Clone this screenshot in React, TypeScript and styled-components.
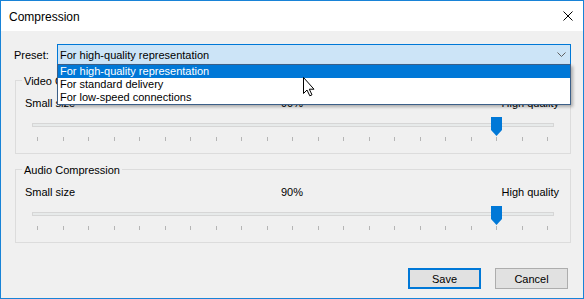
import React from "react";
import styled, { createGlobalStyle } from "styled-components";

const GlobalStyle = createGlobalStyle`
  html, body {
    margin: 0;
    padding: 0;
    background: #ffffff;
  }
  * {
    box-sizing: border-box;
  }
`;

const PRESETS = [
  "For high-quality representation",
  "For standard delivery",
  "For low-speed connections",
];

const TICKS = Array.from({ length: 21 }, (_, i) => i);

const Window = styled.div`
  position: relative;
  width: 584px;
  height: 299px;
  border: 1px solid #1883d7;
  background: #f0f0f0;
  display: flex;
  flex-direction: column;
  font-family: "Liberation Sans", Arial, sans-serif;
  font-size: 11px;
  color: #000;
`;

const TitleBar = styled.div`
  height: 30px;
  flex-shrink: 0;
  background: #ffffff;
  display: flex;
  align-items: center;
  justify-content: space-between;
  padding: 1px 10px 0 8px;
`;

const Title = styled.span`
  font-size: 12px;
`;

const CloseIcon = styled.svg`
  width: 10px;
  height: 10px;
  margin-bottom: 1px;
`;

const Body = styled.div`
  flex: 1;
  display: flex;
  flex-direction: column;
  padding: 13px 12px 9px 14px;
`;

const PresetRow = styled.div`
  display: flex;
  align-items: center;
  margin-left: -1px;
`;

const PresetLabel = styled.span`
  width: 43px;
  flex-shrink: 0;
  line-height: 14px;
`;

const ComboWrap = styled.div`
  position: relative;
  flex: 1;
`;

const Combo = styled.div`
  height: 21px;
  border: 1px solid #0078d7;
  background: #cce4f7;
  display: flex;
  align-items: center;
  justify-content: space-between;
  padding: 0 4px 0 2px;
`;

const Chevron = styled.svg`
  width: 9px;
  height: 5px;
`;

const DropList = styled.ul`
  position: absolute;
  top: 20px;
  left: 0;
  right: 0;
  margin: 0;
  padding: 0;
  list-style: none;
  background: #ffffff;
  border: 1px solid #3b5f88;
  box-shadow: 2px 2px 3px rgba(0, 0, 0, 0.28);
  z-index: 2;
`;

const DropItem = styled.li<{ $active?: boolean }>`
  height: 13px;
  line-height: 13px;
  padding-left: 2px;
  background: ${(p) => (p.$active ? "#0078d7" : "transparent")};
  color: ${(p) => (p.$active ? "#ffffff" : "#000000")};
  white-space: nowrap;
`;

const Group = styled.section`
  margin-top: 15px;
  border: 1px solid #dcdcdc;
  padding: 0 0 12px;
  display: flex;
  flex-direction: column;
`;

const Caption = styled.span`
  align-self: flex-start;
  margin: -7px 0 0 6px;
  padding: 0 2px;
  line-height: 14px;
  background: #f0f0f0;
`;

const ScaleLabels = styled.div`
  display: grid;
  grid-template-columns: 1fr auto 1fr;
  margin-top: 8px;
  padding: 0 11px 0 9px;
  line-height: 14px;
`;

const LabelStart = styled.span`
  justify-self: start;
`;

const LabelEnd = styled.span`
  justify-self: end;
`;

const Slider = styled.div`
  position: relative;
  height: 19px;
  margin: 7px 16px 0;
`;

const Track = styled.div`
  margin-top: 6px;
  height: 4px;
  border: 1px solid #d6d6d6;
  background: #e7eaea;
`;

const Thumb = styled.svg`
  position: absolute;
  top: 0;
  width: 11px;
  height: 19px;
`;

const Ticks = styled.div`
  display: flex;
  justify-content: space-between;
  margin: 1px 16px 0;
  padding: 0 6px 0 5px;
  height: 4px;
`;

const Tick = styled.span`
  width: 1px;
  height: 4px;
  background: #b5b5b5;
`;

const Footer = styled.div`
  margin-top: auto;
  display: flex;
  justify-content: flex-end;
  gap: 14px;
  padding-right: 3px;
`;

const Button = styled.button<{ $default?: boolean }>`
  width: 73px;
  height: 21px;
  margin: 0;
  padding: 0;
  font: inherit;
  color: #000;
  background: #e1e1e1;
  border: ${(p) => (p.$default ? "2px solid #0078d7" : "1px solid #adadad")};
`;

const Cursor = styled.svg`
  position: absolute;
  left: 301px;
  top: 75px;
  width: 13px;
  height: 21px;
  z-index: 3;
`;

type ScaleProps = { title: string; value: number };

const QualityScale: React.FC<ScaleProps> = ({ title, value }) => (
  <Group>
    <Caption>{title}</Caption>
    <ScaleLabels>
      <LabelStart>Small size</LabelStart>
      <span>{value}%</span>
      <LabelEnd>High quality</LabelEnd>
    </ScaleLabels>
    <Slider>
      <Track />
      <Thumb
        viewBox="0 0 11 19"
        style={{ left: `calc((100% - 12px) * ${value / 100})` }}
      >
        <polygon points="0,0 11,0 11,13 5.5,19 0,13" fill="#0078d7" />
      </Thumb>
    </Slider>
    <Ticks>
      {TICKS.map((t) => (
        <Tick key={t} />
      ))}
    </Ticks>
  </Group>
);

export default function App() {
  return (
    <>
      <GlobalStyle />
      <Window>
        <TitleBar>
          <Title>Compression</Title>
          <CloseIcon viewBox="0 0 10 10">
            <path d="M0.5 0.5 L9.5 9.5 M9.5 0.5 L0.5 9.5" stroke="#000" strokeWidth="1" />
          </CloseIcon>
        </TitleBar>
        <Body>
          <PresetRow>
            <PresetLabel>Preset:</PresetLabel>
            <ComboWrap>
              <Combo>
                <span>{PRESETS[0]}</span>
                <Chevron viewBox="0 0 9 5">
                  <path d="M0.5 0.5 L4.5 4.5 L8.5 0.5" fill="none" stroke="#606060" strokeWidth="1" />
                </Chevron>
              </Combo>
              <DropList>
                {PRESETS.map((p, i) => (
                  <DropItem key={p} $active={i === 0}>
                    {p}
                  </DropItem>
                ))}
              </DropList>
            </ComboWrap>
          </PresetRow>
          <QualityScale title="Video Compression" value={90} />
          <QualityScale title="Audio Compression" value={90} />
          <Footer>
            <Button $default>Save</Button>
            <Button>Cancel</Button>
          </Footer>
        </Body>
        <Cursor viewBox="0 0 13 21">
          <path
            d="M1.5 1.5 L1.5 17.5 L5 14 L7.8 19.8 L10 18.8 L7.3 13.2 L12 13.2 Z"
            fill="#fff"
            stroke="#000"
            strokeWidth="1"
            strokeLinejoin="miter"
          />
        </Cursor>
      </Window>
    </>
  );
}
